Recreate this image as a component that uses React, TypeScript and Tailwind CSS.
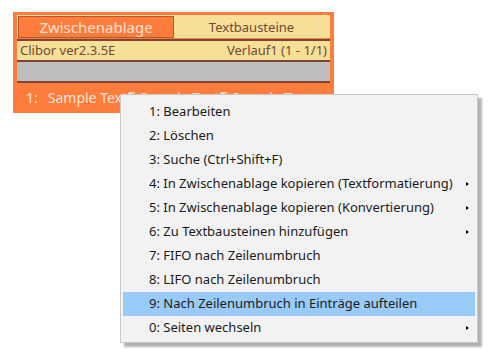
import React from 'react';

const items = [
  { label: '1: Bearbeiten' },
  { label: '2: Löschen' },
  { label: '3: Suche (Ctrl+Shift+F)' },
  { label: '4: In Zwischenablage kopieren (Textformatierung)', sub: true },
  { label: '5: In Zwischenablage kopieren (Konvertierung)', sub: true },
  { label: '6: Zu Textbausteinen hinzufügen', sub: true },
  { label: '7: FIFO nach Zeilenumbruch' },
  { label: '8: LIFO nach Zeilenumbruch' },
  { label: '9: Nach Zeilenumbruch in Einträge aufteilen', active: true },
  { label: '0: Seiten wechseln', sub: true },
];

export default function App() {
  return (
    <div
      className="relative w-[500px] h-[357px] bg-white pt-[12px] pl-[13px] overflow-hidden"
      style={{ fontFamily: '"Noto Sans", "Open Sans", sans-serif' }}
    >
      {/* clibor window */}
      <div className="w-[321px] h-[101px] bg-[#fe7d3d] pt-[3px] px-[4px]">
        <div className="flex h-[23px] bg-[#f6df97] p-[1px] pb-0">
          <div className="w-[156px] h-[22px] bg-[#fe7d3d] border border-[#b8572a] flex items-center justify-center text-[15px] text-[#fde3d4] leading-none">
            Zwischenablage
          </div>
          <div className="flex-1 flex items-center justify-center text-[13px] text-[#6e4a38] leading-none">
            Textbausteine
          </div>
        </div>
        <div className="h-[2px] bg-[#7c4535] mt-[1px]" />
        <div className="h-[19px] bg-[#f6df97] flex items-center justify-between px-[3px] text-[13px] text-[#6e4a38] leading-none">
          <span>Clibor ver2.3.5E</span>
          <span>Verlauf1 (1 - 1/1)</span>
        </div>
        <div className="h-[2px] bg-[#7c4535]" />
        <div className="h-[19px] bg-[#bebebe]" />
        <div className="h-[2px] bg-[#7c4535]" />
        <div className="h-[28px] flex items-center pl-[9px] text-[14px] text-[#fde3d4] whitespace-nowrap overflow-hidden">
          <span className="mr-[10px]">1:</span>
          <span>Sample Text¶ Sample Text¶ Sample T</span>
        </div>
      </div>

      {/* context menu */}
      <div className="absolute left-[120px] top-[94px] w-[358px] bg-[#f2f2f2] border border-[#c8c8c8] pt-[5px] pb-[2px] px-[2px] shadow-[4px_4px_2px_rgba(0,0,0,0.3)]">
        {items.map((it) => (
          <div
            key={it.label}
            className={`relative h-[24px] flex items-center pl-[26px] text-[13px] text-[#1a1a1a] whitespace-nowrap ${
              it.active ? 'bg-[#99cbf8]' : ''
            }`}
          >
            {it.label}
            {it.sub && (
              <span className="absolute right-[6px] top-[10px] w-0 h-0 border-y-[2.5px] border-y-transparent border-l-[3px] border-l-black" />
            )}
          </div>
        ))}
      </div>
    </div>
  );
}
